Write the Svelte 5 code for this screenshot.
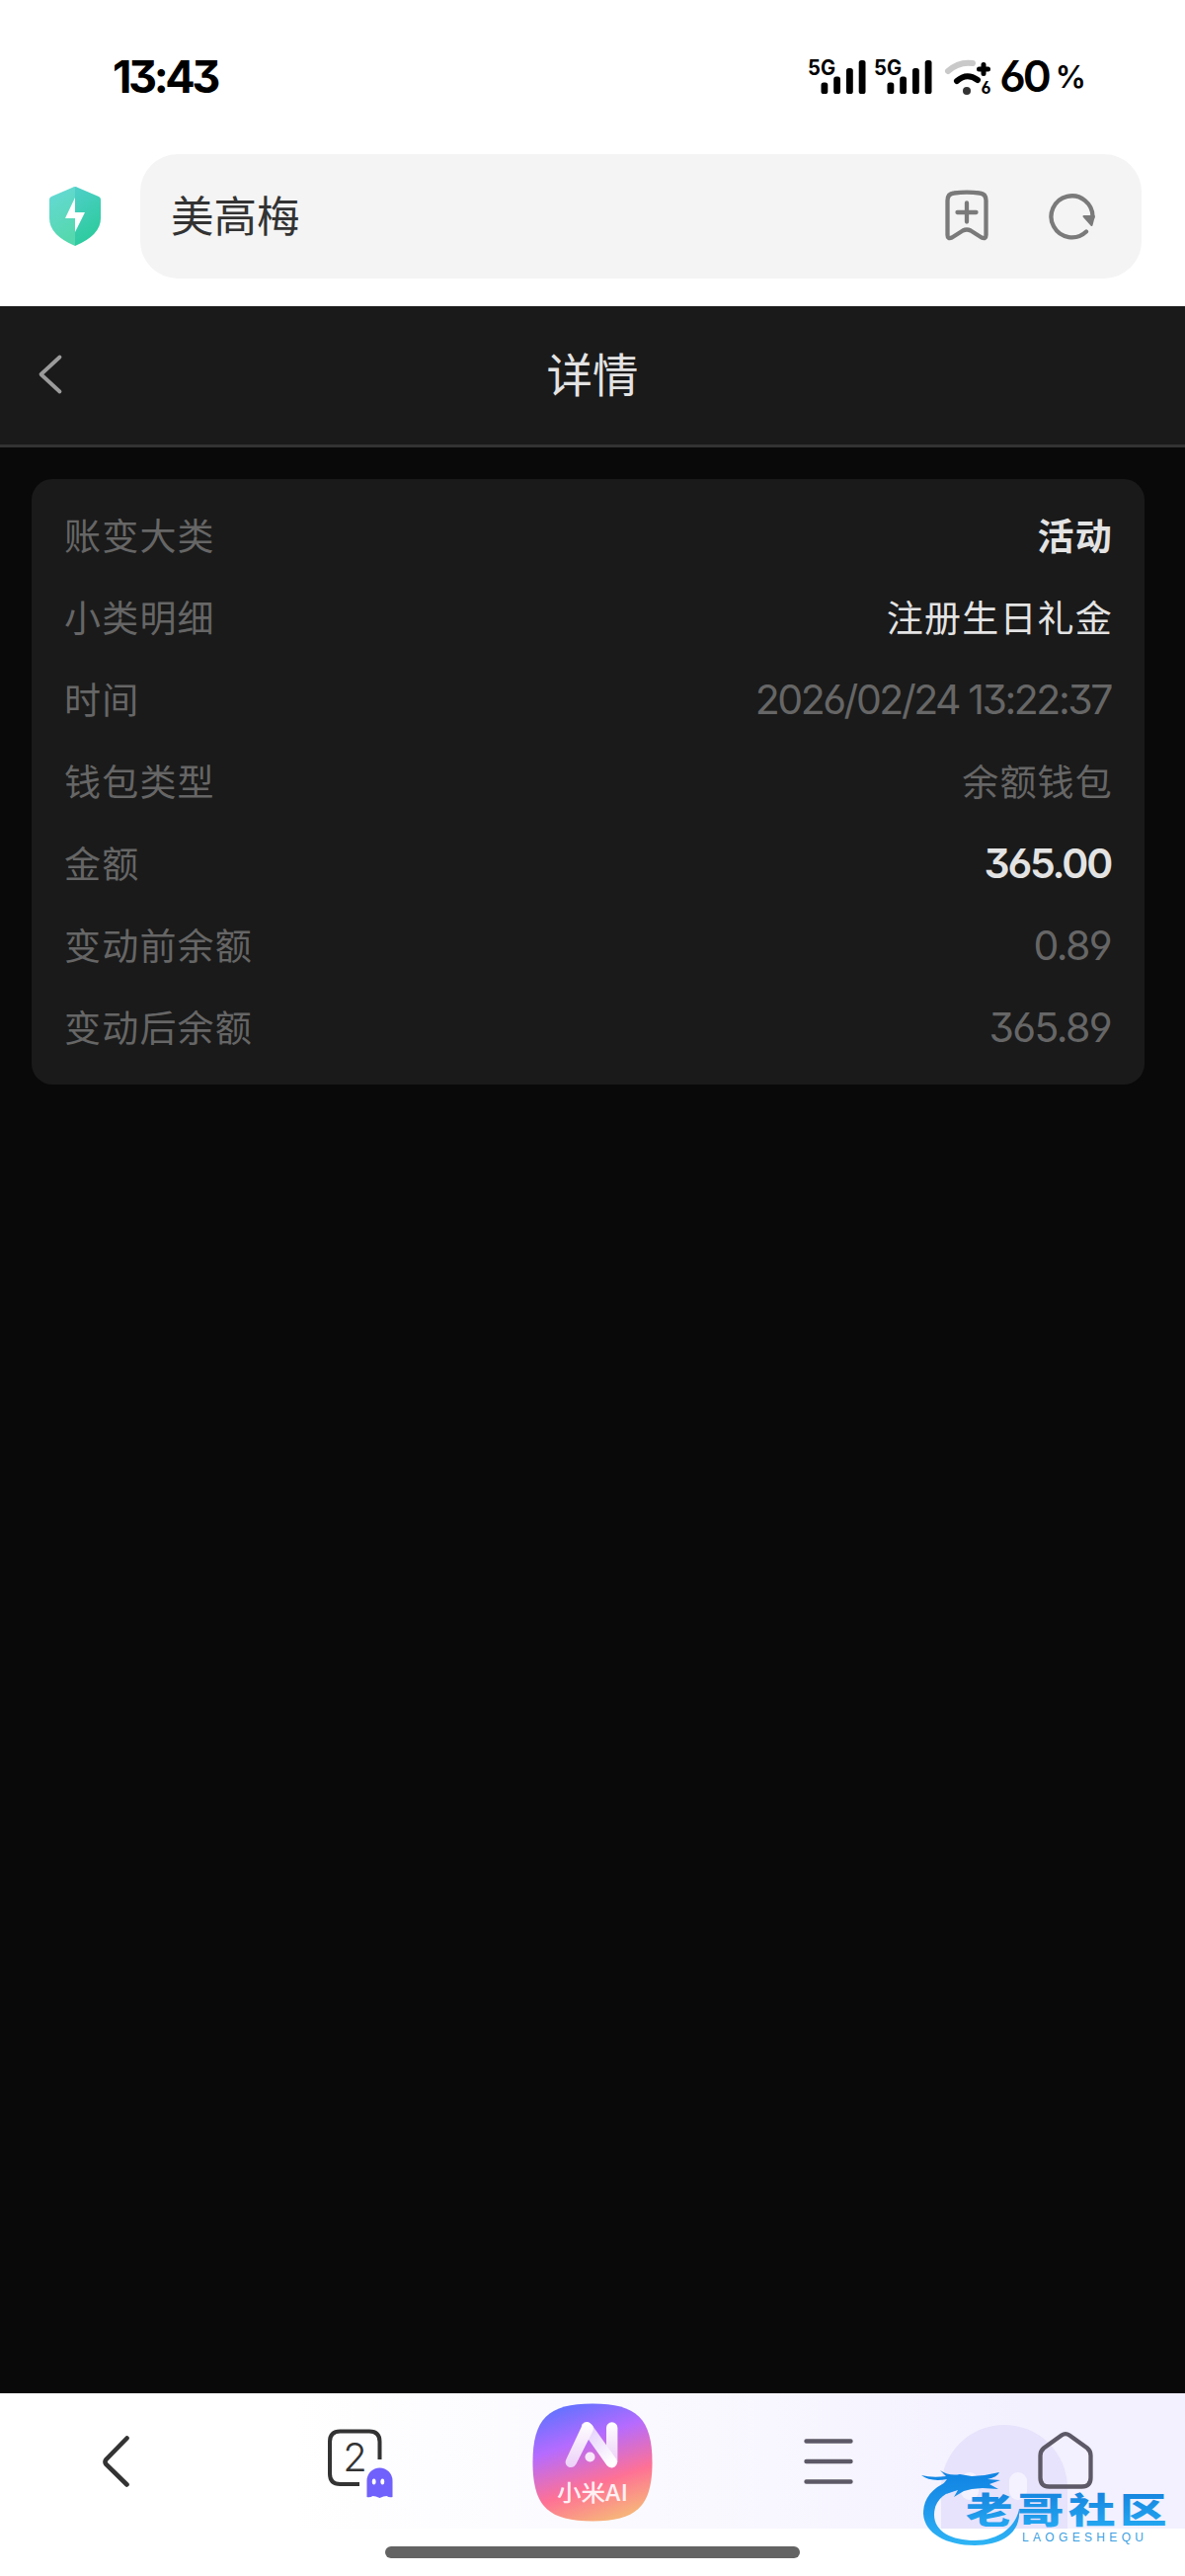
<script>
  const rows = [
    { label: '账变大类', value: '活动', tone: 'strong' },
    { label: '小类明细', value: '注册生日礼金', tone: 'bright' },
    { label: '时间', value: '2026/02/24 13:22:37', number: true, tone: 'date' },
    { label: '钱包类型', value: '余额钱包' },
    { label: '金额', value: '365.00', tone: 'strong', number: true },
    { label: '变动前余额', value: '0.89', number: true },
    { label: '变动后余额', value: '365.89', number: true },
  ];
</script>

{#snippet signal()}
  <svg class="signal" width="60" height="46" viewBox="0 -4 60 46">
    <text x="0" y="18" font-size="21" font-weight="700" textLength="28" lengthAdjust="spacingAndGlyphs">5G</text>
    <rect x="13.5" y="25.5" width="6.8" height="11.5" rx="2.6" />
    <rect x="26.2" y="19.5" width="6.8" height="17.5" rx="2.6" />
    <rect x="39" y="11" width="6.8" height="26" rx="2.6" />
    <rect x="51.7" y="3" width="6.8" height="34" rx="2.6" />
  </svg>
{/snippet}

<div class="screen">
  <div class="status">
    <span class="time">13:43</span>
    <div class="indicators">
      {@render signal()}
      {@render signal()}
      <svg class="wifi" width="50" height="46" viewBox="0 -4 50 46">
        <path d="M4 14 Q15 4 29 6" fill="none" stroke="#c9c9c9" stroke-width="6" stroke-linecap="round" />
        <path d="M13 24 Q23 15 34 23" fill="none" stroke="#000" stroke-width="6" stroke-linecap="round" />
        <circle cx="23" cy="34" r="4" fill="#333" />
        <path d="M40 7.5v9M35.5 12h9" stroke="#000" stroke-width="5" stroke-linecap="round" />
        <text x="37.5" y="37" font-size="17" font-weight="700" textLength="10" lengthAdjust="spacingAndGlyphs">6</text>
      </svg>
      <span class="battery">60</span><span class="percent">%</span>
    </div>
  </div>

  <div class="address">
    <svg class="shield" width="54" height="62" viewBox="0 0 54 62">
      <defs>
        <linearGradient id="shieldLeft" x1="0" y1="0" x2="0.3" y2="1">
          <stop offset="0" stop-color="#65d9d8" />
          <stop offset="1" stop-color="#56d8ae" />
        </linearGradient>
        <linearGradient id="shieldRight" x1="0" y1="0" x2="0.3" y2="1">
          <stop offset="0" stop-color="#4fcfc9" />
          <stop offset="1" stop-color="#2ccb9d" />
        </linearGradient>
      </defs>
      <path d="M27 1 Q25.500 1 24 2 L3 11 Q1 12 1 14 V33 Q1 50 27 61Z" fill="url(#shieldLeft)" />
      <path d="M27 1 Q28.500 1 30 2 L51 11 Q53 12 53 14 V33 Q53 50 27 61Z" fill="url(#shieldRight)" />
      <path d="M27 12V27H37L27 47V33H17Z" fill="#fff" />
    </svg>
    <div class="field">
      <span class="site">美高梅</span>
      <svg class="bookmark" width="46" height="52" viewBox="0 0 46 52">
        <path d="M10 3.500 Q23 1.800 36 3.500 Q42.500 4.200 42.500 11 V46 Q42.500 50.500 38 48.500 L27 41.500 Q23 39.500 19 41.500 L8 48.500 Q3.500 50.500 3.500 46 V11 Q3.500 4.200 10 3.500Z" />
        <path d="M23 13.500V32.500M13.500 23H32.500" />
      </svg>
      <svg class="reload" width="48" height="48" viewBox="0 0 48 48">
        <path d="M38 39.500 A21 21 0 1 1 44.500 25" />
        <path class="arrow" d="M35.500 24H45.800L43.500 33Z" />
      </svg>
    </div>
  </div>

  <header>
    <svg class="back" width="26" height="42" viewBox="0 0 26 42">
      <path d="M22.500 3.500L3.500 21L22.500 38.500" />
    </svg>
    <h1>详情</h1>
  </header>

  <main>
    <div class="card">
      {#each rows as row}
        <div class="row">
          <span class="label">{row.label}</span>
          <span class="value {row.tone ?? ''}" class:number={row.number}>{row.value}</span>
        </div>
      {/each}
    </div>
  </main>

  <footer>
    <div class="toolbar">
      <svg class="bigGhost" width="130" height="105" viewBox="0 0 130 105">
        <path d="M1 105V64a64 64 0 0 1 128 0V105Z" fill="#e7e3fc" />
        <rect x="21" y="48" width="18" height="28" rx="9" fill="#f5f2ff" />
        <rect x="70" y="48" width="18" height="28" rx="9" fill="#f5f2ff" />
      </svg>
      <div class="tab">
        <svg width="30" height="54" viewBox="0 0 30 54">
          <path d="M25.500 3.500L4.500 25Q2.500 27.500 4.500 30L25.500 50.500" fill="none" stroke="#333" stroke-width="4.600" stroke-linecap="round" />
        </svg>
      </div>
      <div class="tab">
        <svg class="pages" width="72" height="74" viewBox="0 0 72 74">
          <path d="M54.500 32V14Q54.500 3.500 44 3.500H14.500Q4 3.500 4 14V46.500Q4 57 14.500 57H34" fill="none" stroke="#333" stroke-width="4" />
          <text x="29.500" y="44" font-size="40" font-weight="300" text-anchor="middle" fill="#333">2</text>
          <path d="M41.500 70V53.500a13 13 0 0 1 26 0V70q-3 1-6-1q-3 0-7 2q-4-2-7-2q-3 2-6 1Z" fill="#7061fc" />
          <ellipse cx="48.700" cy="54.500" rx="1.900" ry="3" fill="#fff" />
          <ellipse cx="57.300" cy="54.500" rx="1.900" ry="3" fill="#fff" />
        </svg>
      </div>
      <div class="tab ai">
        <svg width="122" height="120" viewBox="0 0 122 120">
          <defs>
            <linearGradient id="aiFill" x1="0.250" y1="0" x2="0.600" y2="1">
              <stop offset="0" stop-color="#5f72ff" />
              <stop offset="0.330" stop-color="#b56bff" />
              <stop offset="0.700" stop-color="#fe7195" />
              <stop offset="1" stop-color="#f7b27b" />
            </linearGradient>
            <linearGradient id="aiLeg" x1="0" y1="0" x2="0" y2="1">
              <stop offset="0" stop-color="#fff" />
              <stop offset="1" stop-color="#ecd0f8" />
            </linearGradient>
            <linearGradient id="aiDiagonal" x1="0" y1="0" x2="0.700" y2="1">
              <stop offset="0" stop-color="#dfc5fb" />
              <stop offset="1" stop-color="#fff" />
            </linearGradient>
          </defs>
          <path d="M61 .5C106 .5 121.500 16 121.500 60S106 119.500 61 119.500S.500 104 .500 60S16 .500 61 .500Z" fill="url(#aiFill)" />
          <path d="M75 25a5.700 5.700 0 0 1 11.400 0V60H75Z" fill="url(#aiLeg)" />
          <path d="M50 21.500Q55.500 16.500 60.500 22L85 56.500Q87.500 61 83.500 64.500Q79 67 75.500 63L50 27Z" fill="url(#aiDiagonal)" />
          <path d="M50.500 22.500Q55 16 60.500 22Q63 25 61 29L44.500 61.500Q41.500 66.500 36.500 64.500Q32 61.500 34.500 56.500Z" fill="url(#aiLeg)" />
          <circle cx="58.500" cy="54.500" r="5" fill="#f8e7fb" />
          <text class="aiText" x="61" y="99" font-size="23" text-anchor="middle" textLength="72" lengthAdjust="spacingAndGlyphs">小米AI</text>
        </svg>
      </div>
      <div class="tab menu">
        <svg width="50" height="48" viewBox="0 0 50 48">
          <path d="M2.500 3.500H47.500M2.500 24H47.500M2.500 44.500H47.500" stroke="#5d5966" stroke-width="4.400" stroke-linecap="round" />
        </svg>
      </div>
      <div class="tab home">
        <svg width="58" height="60" viewBox="0 0 58 60">
          <path d="M25 4.500Q29 1.800 33 4.500L51 17.500Q54.500 20.500 54.500 25V47.500Q54.500 56.500 45.500 56.500H12.500Q3.500 56.500 3.500 47.500V25Q3.500 20.500 7 17.500Z" fill="none" stroke="#5d5966" stroke-width="4.300" />
        </svg>
      </div>
    </div>
    <div class="gesture"></div>

    <svg class="watermark" width="260" height="90" viewBox="0 0 260 90">
      <defs>
        <linearGradient id="markFill" gradientUnits="userSpaceOnUse" x1="0" y1="0" x2="0" y2="86">
          <stop offset="0" stop-color="#0b7fe0" />
          <stop offset="0.450" stop-color="#1c92ea" />
          <stop offset="1" stop-color="#2fb6f5" />
        </linearGradient>
        <linearGradient id="textFill" x1="0" y1="0" x2="0" y2="1">
          <stop offset="0" stop-color="#127bd9" />
          <stop offset="1" stop-color="#27aef5" />
        </linearGradient>
      </defs>
      <g fill="url(#markFill)">
        <path d="M30 19C12 27 5 38 5 52C6 72 29 84 57 84C84 84 104 72 102 48C97 68 79 79 57 79C34 79 16 70 16 53C16 38 27 30 42 27Z" />
        <path d="M3 13Q14 16 28 14L22 8Q31 14 42 12L54 14L67 13L82 10Q80 15 70 17L83 18L72 22L81 27L65 26L54 27L46 29L36 35L40 28L28 32L34 25L22 26L29 17Q12 20 3 13Z" />
      </g>
      <g transform="translate(48 62) scale(1.320 1)">
        <text class="markText" x="0" y="0" font-size="36" letter-spacing="3.400" fill="url(#textFill)">老哥社区</text>
      </g>
      <text class="markLatin" x="105" y="80" font-size="12" textLength="123" fill="#3b9fe2">LAOGESHEQU</text>
    </svg>
  </footer>
</div>

<style>
  :global(body) {
    margin: 0;
    background: #090909;
  }

  .screen {
    display: flex;
    flex-direction: column;
    width: 1200px;
    height: 2608px;
    font-family: Inter, 'Noto Sans CJK SC', sans-serif;
    font-feature-settings: 'cv03', 'cv04', 'cv09';
    background: #090909;
  }

  svg {
    display: block;
    flex: none;
  }

  .status {
    display: flex;
    justify-content: space-between;
    align-items: center;
    height: 156px;
    box-sizing: border-box;
    padding: 0 100px 2px 114px;
    background: #fff;
    color: #000;
  }

  .time {
    font-size: 45px;
    font-weight: 650;
    letter-spacing: -3.4px;
  }

  .indicators {
    display: flex;
    align-items: center;
    height: 40px;
  }

  .signal {
    margin-right: 6.5px;
  }

  .wifi {
    margin-left: 5px;
  }

  .battery {
    margin-left: 6px;
    font-size: 44px;
    font-weight: 600;
    letter-spacing: -3px;
  }

  .percent {
    margin-left: 7px;
    font-size: 31px;
    font-weight: 600;
  }

  .address {
    display: flex;
    align-items: flex-start;
    height: 154px;
    padding: 0 44px 0 49px;
    background: #fff;
  }

  .shield {
    margin-top: 32px;
  }

  .field {
    display: flex;
    align-items: center;
    flex: 1;
    height: 126px;
    margin-left: 39px;
    padding: 0 46px 0 31px;
    border-radius: 38px;
    background: #f4f4f4;
    box-sizing: border-box;
  }

  .site {
    flex: 1;
    padding-bottom: 5px;
    font-size: 43.5px;
    color: #333;
  }

  .bookmark,
  .reload {
    fill: none;
    stroke: #7a7a7a;
    stroke-width: 4.3;
    stroke-linecap: round;
    stroke-linejoin: round;
  }

  .bookmark {
    margin-bottom: 2px;
  }

  .reload {
    margin-left: 60px;
  }

  .arrow {
    fill: #7a7a7a;
    stroke-width: 2;
  }

  header {
    display: grid;
    grid-template-columns: 64px 1fr 64px;
    align-items: center;
    height: 140px;
    border-bottom: 3px solid #333;
    background: #1a1a1a;
  }

  .back {
    margin: 0 0 2px 38px;
    fill: none;
    stroke: #9b9b9b;
    stroke-width: 3.8;
    stroke-linecap: round;
    stroke-linejoin: round;
  }

  h1 {
    margin: 0;
    padding-bottom: 8px;
    font-size: 46.5px;
    font-weight: 400;
    text-align: center;
    color: #e3e3e3;
  }

  main {
    flex: 1;
    padding: 32px 41px 0 32px;
  }

  .card {
    padding: 16px 32px;
    border-radius: 21px;
    background: #1a1a1a;
  }

  .row {
    display: flex;
    justify-content: space-between;
    align-items: center;
    height: 83px;
    font-size: 37px;
    letter-spacing: 1.2px;
    color: #666;
  }

  .label,
  .value {
    padding-bottom: 4px;
  }

  .label {
    padding-left: 1px;
  }

  .bright {
    color: #e3e3e3;
  }

  .strong {
    font-weight: 600;
    color: #e3e3e3;
  }

  .number {
    margin-right: 2px;
    padding-bottom: 1px;
    font-size: 41px;
    letter-spacing: -1.6px;
  }

  .number.strong {
    letter-spacing: -2.2px;
  }

  .date {
    letter-spacing: -2.45px;
  }

  footer {
    position: relative;
    height: 185px;
    background: #fff;
  }

  .toolbar {
    display: grid;
    grid-template-columns: repeat(5, 1fr);
    align-items: center;
    position: relative;
    height: 137px;
    background: linear-gradient(90deg, #fff 25%, #f9f8ff 60%, #f3f0ff 90%);
  }

  .tab {
    display: flex;
    justify-content: center;
    position: relative;
  }

  .tab svg {
    margin-left: -5px;
  }

  .tab .pages {
    margin: 6px 0 0 11px;
  }

  .ai svg {
    margin: 3px 0 0;
  }

  .menu svg {
    margin-left: -2px;
  }

  .home svg {
    margin: 0 0 2px -2px;
  }

  .bigGhost {
    position: absolute;
    left: 952px;
    bottom: 0;
  }

  .gesture {
    width: 420px;
    height: 12px;
    margin: 18px auto 0;
    border-radius: 6px;
    background: #636363;
  }

  .watermark {
    position: absolute;
    left: 930px;
    top: 70px;
  }

  .aiText {
    font-family: 'Noto Sans CJK SC', sans-serif;
    font-weight: 500;
    fill: #fff0f4;
  }

  .markText {
    font-family: 'Noto Sans CJK SC', sans-serif;
    font-weight: 900;
  }

  .markLatin {
    font-family: 'Liberation Sans', sans-serif;
  }
</style>
